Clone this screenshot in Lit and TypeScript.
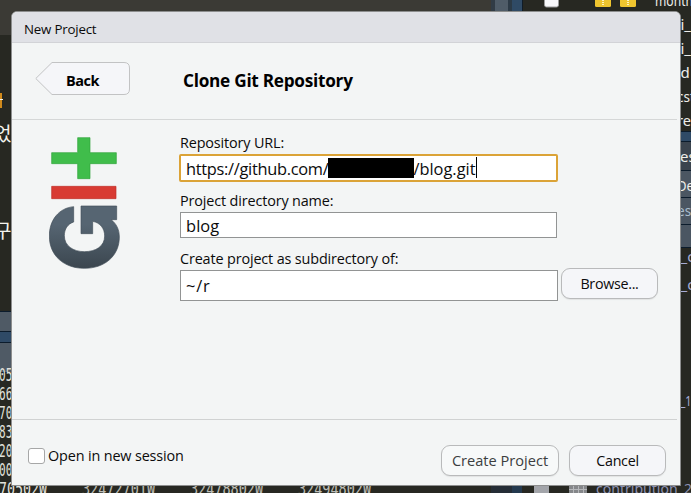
import { LitElement, html, svg, css } from "lit";
import { customElement, state } from "lit/decorators.js";

type Band = [x: number, y: number, w: number, h: number, fill: string];
type Label = [x: number, y: number, text: string, cls: string, width?: number];

const BANDS: Band[] = [
  [0, 0, 491, 35, "#3b3a35"],
  [491, 0, 4, 12, "#313c46"],
  [495, 0, 13, 12, "#4f5c68"],
  [508, 0, 4, 12, "#2c3a46"],
  [512, 0, 11, 12, "#2f4a65"],
  [522, 0, 1, 12, "#101c28"],
  [0, 93, 2, 15, "#d08a1c"],
  [0, 99, 3, 1, "#f4f4ee"],
  [0, 311, 12, 62, "#0c1c2c"],
  [0, 312, 12, 19, "#4f5a65"],
  [0, 332, 12, 10, "#2f4a66"],
  [0, 343, 12, 29, "#4f5a65"],
  [680, 131, 11, 117, "#0c1c2c"],
  [680, 132, 11, 9, "#2f4a66"],
  [680, 142, 11, 28, "#3b444e"],
  [680, 171, 11, 26, "#4b5662"],
  [680, 198, 11, 26, "#4b5662"],
  [680, 225, 11, 22, "#4b5662"],
  [491, 486, 21, 7, "#252d36"],
  [512, 486, 10, 7, "#24394e"],
  [534, 486, 15, 7, "#a3a5aa"],
  [569, 486, 18, 7, "#85878a"],
];

const LABELS: Label[] = [
  [655, 6, "month", "side", 38],
  [680.5, 30, "i_", "side", 10.5],
  [680.5, 54, "i_", "side", 10.5],
  [680.5, 78, "d", "side"],
  [677, 102, "cst", "side", 18],
  [677, 126, "re", "side", 14],
  [680, 162, "es", "side"],
  [677, 191, "De", "side", 17],
  [677, 216, "est", "side dim", 19],
  [680.5, 262, "_c", "side link"],
  [680.5, 290, "_c", "side link"],
  [680.5, 406, "_1", "side link", 11],
  [596, 494, "contribution_2", "side link faded", 96],
  [-6, 141, "었", "hangul"],
  [-6, 238, "구", "hangul"],
  [-1, 381, "057", "mono", 20],
  [-1, 400, "664", "mono", 20],
  [-1, 419, "701", "mono", 20],
  [-1, 438, "832", "mono", 20],
  [-1, 457, "200", "mono", 20],
  [-1, 476, "000", "mono", 20],
  [-1, 495, "70502W", "mono", 48],
  [82, 495, "32472701W", "mono faded", 73],
  [190, 495, "32478802W", "mono faded", 73],
  [298, 495, "32494802W", "mono faded", 73],
];

@customElement("desk-backdrop")
class DeskBackdrop extends LitElement {
  static styles = css`
    :host { display: block; width: 691px; height: 493px; }
    svg { display: block; }
    text { white-space: pre; }
    .side { font: 15px "Noto Sans", "Open Sans", sans-serif; fill: #eeeeea; }
    .dim { fill: #a9bccd; }
    .link { fill: #a6acd6; }
    .faded { opacity: 0.8; }
    .hangul { font: 19px "Noto Sans CJK KR", sans-serif; fill: #f4f4ee; }
    .mono { font: 17px "DejaVu Sans Mono", monospace; fill: #e2e2dc; }
  `;
  render() {
    return html`<svg width="691" height="493" aria-hidden="true">
      <rect width="691" height="493" fill="#272822" />
      ${BANDS.map(([x, y, w, h, f]) => svg`<rect x=${x} y=${y} width=${w} height=${h} fill=${f} />`)}
      <rect x="544.5" y="-8" width="14" height="15" rx="2" fill="#f8f8fb" stroke="#9a9a9a" />
      ${[595, 620].map(
        (x) => svg`<rect x=${x} y="-8" width="16" height="15" rx="1.5" fill="#efc52f" />
          <path d="M${x + 8} 0v5" stroke="#fff4c0" stroke-width="2" stroke-dasharray="1 1" />`
      )}
      <path d="M569 489.5h18M573.5 486v7M578.5 486v7M583.5 486v7" stroke="#b5b7ba" />
      ${LABELS.map(([x, y, t, c, w]) =>
        w
          ? svg`<text x=${x} y=${y} class=${c} textLength=${w} lengthAdjust="spacingAndGlyphs">${t}</text>`
          : svg`<text x=${x} y=${y} class=${c}>${t}</text>`
      )}
    </svg>`;
  }
}

@customElement("git-logo")
class GitLogo extends LitElement {
  static styles = css`:host, svg { display: block; }`;
  render() {
    return html`<svg width="71" height="132" viewBox="57 36 213 396" role="img" aria-label="git">
      <defs>
        <linearGradient id="g" x1="0" y1="0" x2="0" y2="1">
          <stop offset="0.3" stop-color="#566572" />
          <stop offset="1" stop-color="#3b464f" />
        </linearGradient>
      </defs>
      <path d="M143 38h37v45h79v33h-79v45h-37v-45H65V83h78z" fill="#40bd4b" stroke="#2fa53a" stroke-width="2" />
      <path d="M65 184h193v37H65z" fill="#d83b33" stroke="#bd2d27" stroke-width="2" />
      <path
        d="M131 245C86 249 58 286 58 333C58 393 103 430 163 430C224 430 268 393 268 336C268 315 260 296 243 284H260V243H153V326H188V289C210 293 224 310 224 333C224 364 197 380 163 380C129 380 103 362 103 332C103 312 113 297 131 291Z"
        fill="url(#g)" stroke="#44505a" stroke-width="2" />
    </svg>`;
  }
}

@customElement("app-root")
class AppRoot extends LitElement {
  @state() private newSession = false;

  static styles = css`
    :host {
      display: block;
      position: relative;
      width: 691px;
      height: 493px;
      overflow: hidden;
      color: #0b0b0b;
      font-family: "Open Sans", "Noto Sans", sans-serif;
    }
    * { box-sizing: border-box; }
    .dialog {
      position: absolute;
      left: 11px;
      top: 11px;
      width: 670px;
      height: 475px;
      display: flex;
      flex-direction: column;
      background: #f3f5f5;
      border: 1px solid #8d8e8e;
      border-radius: 6px 6px 0 0;
      overflow: hidden;
    }
    .title {
      height: 31px;
      flex: none;
      padding-left: 12px;
      background: #e0e1e6;
      border-bottom: 1px solid #d2d3d7;
      font-size: 13.3px;
      line-height: 34px;
      letter-spacing: -0.2px;
    }
    .header {
      display: flex;
      align-items: flex-start;
      height: 77px;
      flex: none;
      margin-right: 3px;
      padding: 19px 0 0 23px;
      border-bottom: 1px solid #d5d7d7;
    }
    .back {
      display: grid;
      width: 95px;
      height: 34px;
      padding: 0;
      border: 0;
      background: none;
      color: #000;
    }
    .back svg, .back span { grid-area: 1 / 1; }
    .back span {
      font: bold 14.5px/37px "Open Sans", sans-serif;
      letter-spacing: -0.5px;
      text-align: left;
      padding-left: 31px;
    }
    .heading {
      margin: 0 0 0 53px;
      font-size: 17.2px;
      line-height: 37px;
      font-weight: bold;
      letter-spacing: -0.26px;
      color: #000;
    }
    .body {
      display: flex;
      height: 300px;
      flex: none;
      margin-right: 3px;
      border-bottom: 1px solid #d0d2d2;
    }
    git-logo { margin: 17px 0 0 37px; width: 71px; }
    .form { margin: 12px 0 0 60px; display: flex; flex-direction: column; }
    label, .check { font-size: 14.4px; letter-spacing: -0.14px; white-space: nowrap; }
    .form label { line-height: 22px; height: 22px; }
    .field {
      display: flex;
      align-items: center;
      width: 377px;
      background: #fff;
      border: 1px solid #929494;
      padding-left: 5px;
      font-size: 16.4px;
      letter-spacing: -0.25px;
      white-space: nowrap;
    }
    .url {
      width: 379px;
      height: 28px;
      margin: 0 0 8px -1px;
      border: 2px solid #dba337;
      border-radius: 2px;
      letter-spacing: -0.3px;
    }
    .repo { margin-left: -1px; letter-spacing: 0; }
    .name { height: 26px; margin-bottom: 10px; letter-spacing: 0.1px; }
    .dir { width: 378px; height: 31px; letter-spacing: 0.8px; }
    .row { display: flex; gap: 3px; }
    .row .button { margin-top: -2px; }
    .hidden { width: 86px; height: 20px; background: #000; }
    .caret { width: 1px; height: 21px; background: #000; align-self: flex-start; margin-top: 1px; }
    .button {
      height: 31px;
      width: 97px;
      padding: 0;
      background: #f5f6f9;
      border: 1px solid #b9babb;
      border-radius: 9px;
      box-shadow: 0 1px 1px #e1e3e3;
      font: 14.3px/29px "Open Sans", "Noto Sans", sans-serif;
      letter-spacing: -0.3px;
      color: #0b0b0b;
      white-space: nowrap;
    }
    .footer { display: flex; align-items: flex-start; flex: 1; padding: 25px 14px 0 16px; }
    .check { display: flex; align-items: center; gap: 3px; height: 21px; }
    .box { width: 17px; height: 16px; background: #fff; border: 1px solid #a6a7a7; border-radius: 3px; margin-top: 1px; }
    .box.on { background: #7793b5; }
    .create {
      width: 118px;
      margin: 0 10px 0 auto;
      background: #f7f9f9;
      color: #3c3e3f;
      font-size: 14.6px;
      letter-spacing: 0;
    }
  `;

  render() {
    return html`
      <desk-backdrop></desk-backdrop>
      <section class="dialog" role="dialog">
        <div class="title">New Project</div>
        <header class="header">
          <button class="back">
            <svg width="95" height="34">
              <path d="M.8 16.500L17 .5H89q5.500 0 5.500 5.500V27q0 5.500-5.500 5.500H17z" fill="#f5f6f9" stroke="#c2c3c4" />
            </svg>
            <span>Back</span>
          </button>
          <h1 class="heading">Clone Git Repository</h1>
        </header>
        <main class="body">
          <git-logo></git-logo>
          <div class="form">
            <label>Repository URL:</label>
            <div class="field url">
              <span class="host">https://github.com/</span><span class="hidden"></span><span class="repo">/blog.git</span><span class="caret"></span>
            </div>
            <label>Project directory name:</label>
            <div class="field name">blog</div>
            <label>Create project as subdirectory of:</label>
            <div class="row">
              <div class="field dir">~/r</div>
              <button class="button">Browse...</button>
            </div>
          </div>
        </main>
        <footer class="footer">
          <div class="check" @click=${() => (this.newSession = !this.newSession)}>
            <span class="box ${this.newSession ? "on" : ""}"></span>
            <span>Open in new session</span>
          </div>
          <button class="button create">Create Project</button>
          <button class="button">Cancel</button>
        </footer>
      </section>
    `;
  }
}
